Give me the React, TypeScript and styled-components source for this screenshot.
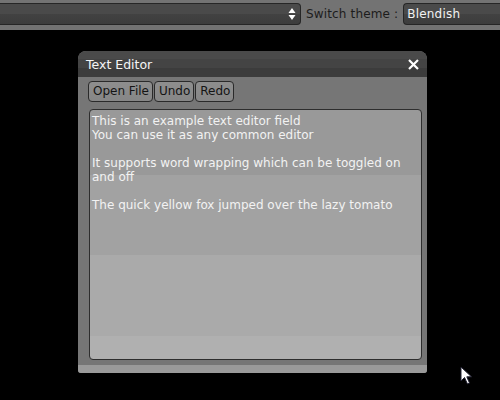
import React from "react";
import styled, { createGlobalStyle } from "styled-components";

const Global = createGlobalStyle`
  html, body { margin: 0; padding: 0; background: #000; }
  body { width: 500px; height: 400px; overflow: hidden; font-family: "DejaVu Sans", "Liberation Sans", sans-serif; }
`;

const Page = styled.div`
  position: relative;
  width: 500px;
  height: 400px;
  background: #000;
  overflow: hidden;
`;

const TopBar = styled.div`
  height: 30px;
  background: #737373;
  display: flex;
  align-items: center;
  gap: 5px;
  box-sizing: border-box;
  padding-bottom: 2px;
`;

const Combo = styled.div<{ $w: number; $openLeft?: boolean; $openRight?: boolean }>`
  flex: none;
  width: ${(p) => p.$w}px;
  height: 22px;
  box-sizing: border-box;
  border: 1px solid #262626;
  ${(p) => (p.$openLeft ? "border-left: none;" : "")}
  ${(p) => (p.$openRight ? "border-right: none;" : "")}
  border-radius: ${(p) => (p.$openLeft ? "0 4px 4px 0" : p.$openRight ? "4px 0 0 4px" : "4px")};
  background: linear-gradient(#4a4a4a 0, #4a4a4a 50%, #424242 50%, #3d3d3d 100%);
  display: flex;
  align-items: center;
  justify-content: space-between;
  padding: 0 4px 0 3px;
  color: #f2f2f2;
  font-size: 12px;
  letter-spacing: 0.2px;
`;

const Label = styled.span`
  color: #1c1c1c;
  font-size: 12px;
  letter-spacing: 0.15px;
  white-space: nowrap;
`;

const Desktop = styled.div`
  padding: 21px 0 0 78px;
`;

const Window = styled.div`
  width: 349px;
  height: 322px;
  display: flex;
  flex-direction: column;
  border-radius: 8px 8px 3px 3px;
  overflow: hidden;
  background: #767676;
`;

const TitleBar = styled.div`
  height: 26px;
  flex: none;
  background: linear-gradient(#4a4a4a 0, #4a4a4a 30%, #444 30%, #444 65%, #3c3c3c 65%, #3c3c3c 100%);
  display: flex;
  align-items: center;
  justify-content: space-between;
  padding: 0 8px 0 8px;
  color: #f4f4f4;
  font-size: 12.5px;
`;

const Body = styled.div`
  flex: 1;
  display: flex;
  flex-direction: column;
  gap: 7px;
  padding: 4px 5px 5px 10px;
  min-height: 0;
`;

const Toolbar = styled.div`
  display: flex;
  gap: 1px;
`;

const Button = styled.button`
  height: 21px;
  box-sizing: border-box;
  border: 1px solid #2a2a2a;
  border-radius: 4px;
  background: linear-gradient(#8e8e8e, #868686);
  color: #141414;
  font-family: "DejaVu Sans", sans-serif;
  font-size: 12px;
  padding: 0 3px 0 4px;
  line-height: 19px;
`;

const Editor = styled.div`
  flex: 1;
  margin-left: 1px;
  box-sizing: border-box;
  border: 1px solid #2e2e2e;
  border-radius: 4px;
  background: linear-gradient(
    #999 0, #999 65px,
    #a2a2a2 65px, #a2a2a2 145px,
    #aaa 145px, #aaa 226px,
    #b0b0b0 226px, #b0b0b0 100%
  );
  color: #f2f2f2;
  font-size: 12px;
  line-height: 14px;
  padding: 4px 3px 3px 2px;
  white-space: pre-wrap;
`;

const Footer = styled.div`
  height: 8px;
  flex: none;
  background: #9a9a9a;
`;

const Cursor = styled.svg`
  position: absolute;
  left: 460px;
  top: 366px;
`;

export default function App() {
  const text =
    "This is an example text editor field\nYou can use it as any common editor\n\nIt supports word wrapping which can be toggled on and off\n\nThe quick yellow fox jumped over the lazy tomato";
  return (
    <Page>
      <Global />
      <TopBar>
        <Combo $w={301} $openLeft>
          <span />
          <svg width="8" height="14" viewBox="0 0 8 14">
            <path d="M4 1 L7.5 6 L0.5 6 Z" fill="#fff" />
            <path d="M4 13 L7.5 8 L0.5 8 Z" fill="#fff" />
          </svg>
        </Combo>
        <Label>Switch theme :</Label>
        <Combo $w={98} $openRight>
          <span>Blendish</span>
        </Combo>
      </TopBar>
      <Desktop>
        <Window>
          <TitleBar>
            <span>Text Editor</span>
            <svg width="11" height="11" viewBox="0 0 11 11">
              <path d="M1 1 L10 10 M10 1 L1 10" stroke="#fff" strokeWidth="2.2" />
            </svg>
          </TitleBar>
          <Body>
            <Toolbar>
              <Button>Open File</Button>
              <Button>Undo</Button>
              <Button>Redo</Button>
            </Toolbar>
            <Editor>{text}</Editor>
          </Body>
          <Footer />
        </Window>
      </Desktop>
      <Cursor width="14" height="20" viewBox="0 0 14 20">
        <path d="M1 1 L1 15 L4.5 11.5 L7.5 18 L9.5 17 L6.8 10.8 L11.5 10.8 Z" fill="#fff" stroke="#223" strokeWidth="1" />
      </Cursor>
    </Page>
  );
}
